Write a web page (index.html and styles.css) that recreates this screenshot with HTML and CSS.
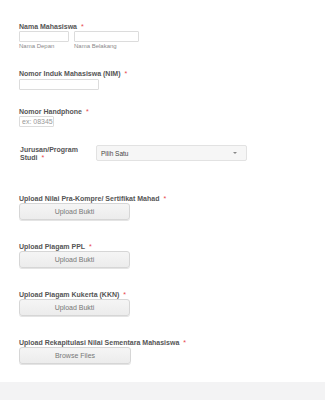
FILE: index.html
```html
<!DOCTYPE html>
<html>
<head>
<meta charset="utf-8">
<link rel="stylesheet" href="styles.css">
</head>
<body>
<div class="form">
  <div class="field f-nama">
    <div class="label">Nama Mahasiswa <span class="req">*</span></div>
    <div class="name-row">
      <div class="name-col">
        <div class="input w-first"></div>
        <div class="sub">Nama Depan</div>
      </div>
      <div class="name-col">
        <div class="input w-last"></div>
        <div class="sub">Nama Belakang</div>
      </div>
    </div>
  </div>
  <div class="field f-nim">
    <div class="label">Nomor Induk Mahasiswa (NIM) <span class="req">*</span></div>
    <div class="input w-nim"></div>
  </div>
  <div class="field f-hp">
    <div class="label">Nomor Handphone <span class="req">*</span></div>
    <div class="input w-hp"><span class="ph">ex: 08345</span></div>
  </div>
  <div class="field f-jur">
    <div class="jur-label">Jurusan/Program<br>Studi <span class="req">*</span></div>
    <div class="select"><span>Pilih Satu</span><span class="caret"></span></div>
  </div>
  <div class="field f-up1">
    <div class="label">Upload Nilai Pra-Kompre/ Sertifikat Mahad <span class="req">*</span></div>
    <div class="btn">Upload Bukti</div>
  </div>
  <div class="field f-up">
    <div class="label">Upload Piagam PPL <span class="req">*</span></div>
    <div class="btn">Upload Bukti</div>
  </div>
  <div class="field f-up">
    <div class="label">Upload Piagam Kukerta (KKN) <span class="req">*</span></div>
    <div class="btn">Upload Bukti</div>
  </div>
  <div class="field f-up">
    <div class="label">Upload Rekapitulasi Nilai Sementara Mahasiswa <span class="req">*</span></div>
    <div class="btn wide">Browse Files</div>
  </div>
</div>
<div class="footer"></div>
</body>
</html>
```
FILE: styles.css
```css
html, body {
  margin: 0;
  padding: 0;
  background: #fff;
  font-family: "Liberation Sans", Arial, sans-serif;
  color: #555;
}
.form {
  padding: 22px 0 0 19px;
}
.label {
  font-size: 7px;
  font-weight: bold;
  line-height: 9px;
  height: 9px;
  color: #555;
  white-space: nowrap;
}
.req {
  color: #e8454a;
  font-weight: normal;
  margin-left: 2px;
}
.input {
  box-sizing: border-box;
  height: 11px;
  border: 1px solid #dcdcdc;
  border-radius: 1px;
  background: #fff;
}
.name-row {
  display: flex;
  gap: 5px;
}
.w-first { width: 50px; }
.w-last { width: 65px; }
.w-nim { width: 80px; margin-top: 1px; }
.w-hp {
  width: 35px;
  display: flex;
  align-items: center;
  padding-left: 2px;
  overflow: hidden;
}
.ph {
  font-size: 7px;
  color: #999;
  line-height: 9px;
  white-space: nowrap;
}
.sub {
  font-size: 6px;
  line-height: 8px;
  color: #8a8a8a;
}
.f-nim { margin-top: 19px; }
.f-hp { margin-top: 17px; }
.f-jur {
  margin-top: 18px;
  display: flex;
  align-items: flex-start;
}
.jur-label {
  width: 76px;
  padding-left: 1px;
  padding-top: 1px;
  font-size: 7px;
  font-weight: bold;
  line-height: 8px;
  color: #555;
}
.select {
  box-sizing: border-box;
  width: 151px;
  height: 16px;
  border: 1px solid #e2e2e2;
  border-radius: 2px;
  background: #f6f6f6;
  display: flex;
  align-items: center;
  justify-content: space-between;
  padding: 0 9px 0 4px;
  font-size: 6.5px;
  color: #444;
}
.caret {
  width: 0;
  height: 0;
  border-left: 2.5px solid transparent;
  border-right: 2.5px solid transparent;
  border-top: 2.5px solid #888;
}
.f-up1 { margin-top: 32px; }
.f-up { margin-top: 22px; }
.btn {
  box-sizing: border-box;
  width: 111px;
  height: 17px;
  border: 1px solid #d6d6d6;
  border-radius: 3px;
  background: linear-gradient(#f5f5f5, #ececec);
  box-shadow: 0 1px 0 #e4e4e4;
  display: flex;
  align-items: center;
  justify-content: center;
  font-size: 7px;
  color: #777;
}
.btn.wide { width: 112px; }
.footer {
  margin-top: 18px;
  height: 18px;
  background: #f3f3f4;
}
```
